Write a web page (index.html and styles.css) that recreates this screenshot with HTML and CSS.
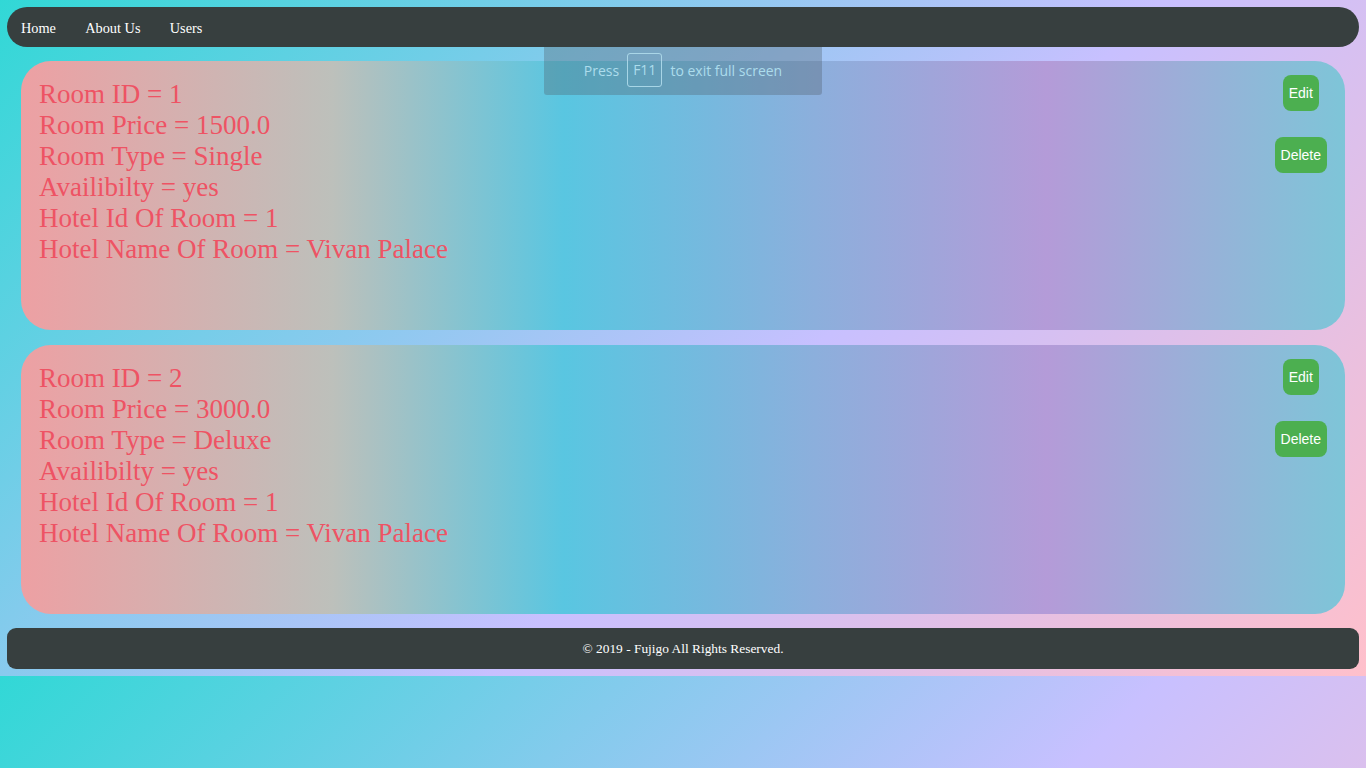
FILE: index.html
```html
<!DOCTYPE html>
<html lang="en">
<head>
<meta charset="utf-8">
<title>Rooms</title>
<link rel="stylesheet" href="styles.css">
</head>
<body>
<nav class="navbar">
  <a class="nav-link" href="#">Home</a>
  <a class="nav-link" href="#">About Us</a>
  <a class="nav-link" href="#">Users</a>
</nav>

<main class="rooms">
  <section class="room-card">
    <div class="room-info">
      <div class="room-line">Room ID = 1</div>
      <div class="room-line">Room Price = 1500.0</div>
      <div class="room-line">Room Type = Single</div>
      <div class="room-line">Availibilty = yes</div>
      <div class="room-line">Hotel Id Of Room = 1</div>
      <div class="room-line">Hotel Name Of Room = Vivan Palace</div>
    </div>
    <div class="room-actions">
      <button class="btn">Edit</button>
      <button class="btn">Delete</button>
    </div>
  </section>

  <section class="room-card">
    <div class="room-info">
      <div class="room-line">Room ID = 2</div>
      <div class="room-line">Room Price = 3000.0</div>
      <div class="room-line">Room Type = Deluxe</div>
      <div class="room-line">Availibilty = yes</div>
      <div class="room-line">Hotel Id Of Room = 1</div>
      <div class="room-line">Hotel Name Of Room = Vivan Palace</div>
    </div>
    <div class="room-actions">
      <button class="btn">Edit</button>
      <button class="btn">Delete</button>
    </div>
  </section>
</main>

<footer class="footer">
  <p class="footer-text">© 2019 - Fujigo All Rights Reserved.</p>
</footer>

<div class="fs-notice">
  <span>Press</span>
  <span class="fs-key">F11</span>
  <span>to exit full screen</span>
</div>
</body>
</html>
```

FILE: styles.css
```css
body {
  margin: 7px;
  background: linear-gradient(135deg, #31d8d6 0%, #c8c0ff 57%, #ffc0cb 100%);
  font-family: "Liberation Serif", "Times New Roman", serif;
}

.navbar {
  height: 40px;
  background: #373f3f;
  border-radius: 20px;
  display: flex;
  align-items: center;
  gap: 29.3px;
  padding: 3px 0 0 14px;
  box-sizing: border-box;
}

.nav-link {
  color: #ffffff;
  text-decoration: none;
  font-size: 14.3px;
}

.rooms {
  display: flex;
  flex-direction: column;
  gap: 15px;
  padding: 14px;
}

.room-card {
  height: 269px;
  box-sizing: border-box;
  border-radius: 30px;
  background: linear-gradient(to right, #eda0a3 0%, #bdc0bb 23.5%, #59c6e1 41%, #8cafdc 60%, #b49bd8 77.5%, #7ec5d8 100%);
  display: flex;
  justify-content: space-between;
  align-items: flex-start;
}

.room-info {
  padding: 18px 18px;
  color: #ee5364;
  font-size: 27px;
}

.room-actions {
  display: flex;
  flex-direction: column;
  align-items: center;
  gap: 26px;
  padding: 14px 18px 0 0;
}

.btn {
  border: none;
  background: #4caf50;
  color: #ffffff;
  font-family: "Liberation Sans", Arial, sans-serif;
  font-size: 14px;
  line-height: 16px;
  padding: 10px 6px;
  border-radius: 8px;
}

.footer {
  height: 41px;
  background: #373f3f;
  border-radius: 9px;
  display: flex;
  align-items: center;
  justify-content: center;
}

.footer-text {
  margin: 0;
  color: #ffffff;
  font-size: 13.4px;
}

.fs-notice {
  position: absolute;
  top: 47px;
  left: 544px;
  width: 278px;
  height: 48px;
  box-sizing: border-box;
  padding-bottom: 2px;
  display: flex;
  align-items: center;
  justify-content: center;
  gap: 8px;
  background: rgba(80, 92, 104, 0.33);
  border-radius: 0 0 3px 3px;
  color: #acdcec;
  font-family: "Open Sans", "Noto Sans", sans-serif;
  font-size: 14px;
}

.fs-key {
  border: 1px solid rgba(175, 220, 235, 0.9);
  border-radius: 3px;
  padding: 0 5px;
  height: 32px;
  line-height: 32px;
}
```
